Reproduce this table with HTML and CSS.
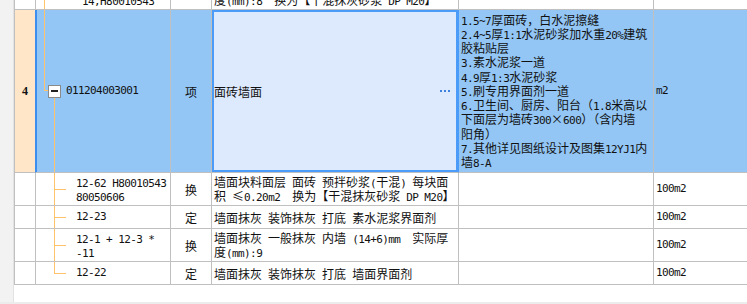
FILE: index.html
```html
<!DOCTYPE html>
<html>
<head>
<meta charset="utf-8">
<link rel="stylesheet" href="styles.css">
</head>
<body>
<div class="screen">
  <div class="main">
    <div class="gutter"></div>
    <div class="sheet">
      <div class="grid">
        <div class="row h33">
          <div class="num"></div>
          <div class="code child tree-up"><div><span class="a">12-1 + 12-3 *</span><br><span class="a"> 14,H80010543</span></div></div>
          <div class="type">换</div>
          <div class="name"><div>墙面抹灰<span class="a"> </span>一般抹灰<span class="a"> </span>内墙<span class="a"> (14+6)mm  </span>实际厚<br>度<span class="a">(mm):8  </span>换为【干混抹灰砂浆<span class="a"> DP M20</span>】</div></div>
          <div class="feat"></div>
          <div class="unit"><span class="a">100m2</span></div>
        </div>
        <div class="row h163 sel">
          <div class="num">4</div>
          <div class="code parent"><span class="box"></span><span class="a">011204003001</span></div>
          <div class="type">项</div>
          <div class="name edit"><span>面砖墙面</span><span class="more"></span></div>
          <div class="feat"><div class="lines"><span class="a">1.5~7</span>厚面砖，白水泥擦缝<br><span class="a">2.4~5</span>厚<span class="a">1:1</span>水泥砂浆加水重<span class="a">20%</span>建筑<br>胶粘贴层<br><span class="a">3.</span>素水泥浆一道<br><span class="a">4.9</span>厚<span class="a">1:3</span>水泥砂浆<br><span class="a">5.</span>刷专用界面剂一道<br><span class="a">6.</span>卫生间、厨房、阳台（<span class="a">1.8</span>米高以<br>下面层为墙砖<span class="a">300</span><span class="w">×</span><span class="a">600</span>）（含内墙<br>阳角）<br><span class="a">7.</span>其他详见图纸设计及图集<span class="a">12YJ1</span>内<br>墙<span class="a">8-A</span></div></div>
          <div class="unit"><span class="a">m2</span></div>
        </div>
        <div class="row h33">
          <div class="num"></div>
          <div class="code child tree-mid"><div><span class="a">12-62 H80010543</span><br><span class="a">80050606</span></div></div>
          <div class="type">换</div>
          <div class="name"><div>墙面块料面层<span class="a"> </span>面砖<span class="a"> </span>预拌砂浆<span class="a">(</span>干混<span class="a">) </span>每块面<br>积<span class="a"> </span><span class="w">≤</span><span class="a">0.20m2  </span>换为【干混抹灰砂浆<span class="a"> DP M20</span>】</div></div>
          <div class="feat"></div>
          <div class="unit"><span class="a">100m2</span></div>
        </div>
        <div class="row h23">
          <div class="num"></div>
          <div class="code child tree-mid"><span class="a">12-23</span></div>
          <div class="type">定</div>
          <div class="name">墙面抹灰<span class="a"> </span>装饰抹灰<span class="a"> </span>打底<span class="a"> </span>素水泥浆界面剂</div>
          <div class="feat"></div>
          <div class="unit"><span class="a">100m2</span></div>
        </div>
        <div class="row h33">
          <div class="num"></div>
          <div class="code child tree-mid"><div><span class="a">12-1 + 12-3 *</span><br><span class="a">-11</span></div></div>
          <div class="type">换</div>
          <div class="name"><div>墙面抹灰<span class="a"> </span>一般抹灰<span class="a"> </span>内墙<span class="a"> (14+6)mm  </span>实际厚<br>度<span class="a">(mm):9</span></div></div>
          <div class="feat"></div>
          <div class="unit"><span class="a">100m2</span></div>
        </div>
        <div class="row h23">
          <div class="num"></div>
          <div class="code child tree-last"><span class="a">12-22</span></div>
          <div class="type">定</div>
          <div class="name">墙面抹灰<span class="a"> </span>装饰抹灰<span class="a"> </span>打底<span class="a"> </span>墙面界面剂</div>
          <div class="feat"></div>
          <div class="unit"><span class="a">100m2</span></div>
        </div>
      </div>
    </div>
  </div>
  <div class="bottom"></div>
</div>
</body>
</html>
```

FILE: styles.css
```css
* { box-sizing: border-box; }
html, body { margin: 0; padding: 0; background: #fff; }
body {
  font-family: "Noto Sans CJK SC", sans-serif;
  font-size: 12px;
  color: #111;
}
.screen {
  width: 747px;
  height: 304px;
  overflow: hidden;
  display: flex;
  flex-direction: column;
}
.main {
  height: 302px;
  flex: none;
  display: flex;
  overflow: hidden;
}
.gutter {
  width: 14px;
  flex: none;
  background: #f2f2f2;
  border-right: 1px solid #e2e2e2;
}
.sheet { flex: 1; overflow: hidden; }
.bottom { flex: 1; background: #ececec; }

.grid {
  margin-top: -23px;
  border-left: 1px solid #c0c0c0;
}
.row {
  display: grid;
  grid-template-columns: 21px 135px 41px 247px 195px 1fr;
}
.h33 { height: 33px; }
.h23 { height: 23px; }
.h163 { height: 163px; }

.row > div {
  border-right: 1px solid #c0c0c0;
  border-bottom: 1px solid #c0c0c0;
  display: flex;
  align-items: center;
  white-space: nowrap;
  overflow: hidden;
  line-height: 13px;
}
.row > .unit { border-right: none; padding-left: 2px; }

.a {
  font-family: "DejaVu Sans Mono", monospace;
  font-size: 11px;
  line-height: 10px;
  letter-spacing: -0.6px;
  white-space: pre;
}
.w {
  display: inline-block;
  width: 12px;
  line-height: 10px;
  text-align: center;
}

.num {
  justify-content: center;
  font-family: "Liberation Serif", serif;
  font-weight: bold;
  font-size: 12px;
}
.type { justify-content: center; }
.name { padding-left: 2px; }
.feat { padding-left: 2px; }
.lines { line-height: 14.2px; }

/* tree column */
.code.child { padding-left: 40px; }
.code.parent { padding-left: 12px; }
.tree-up {
  background: linear-gradient(#ffc46b, #ffc46b) 8px 0 / 1px 100% no-repeat;
}
.tree-mid {
  background:
    linear-gradient(#ffc46b, #ffc46b) 18px 0 / 1px 100% no-repeat,
    linear-gradient(#ffc46b, #ffc46b) 18px 50% / 12px 1px no-repeat;
}
.tree-last {
  background:
    linear-gradient(#ffc46b, #ffc46b) 18px 0 / 1px 50% no-repeat,
    linear-gradient(#ffc46b, #ffc46b) 18px 50% / 12px 1px no-repeat;
}
.box {
  width: 13px;
  height: 13px;
  border: 1px solid #8a8a8a;
  background: #fff;
  margin-right: 5px;
  display: flex;
  align-items: center;
  justify-content: center;
  flex: none;
}
.box::before {
  content: "";
  width: 7px;
  height: 2px;
  background: #222;
}

/* selected row */
.sel > div { background-color: #93c6f5; }
.sel > .num { background-color: #ffe6c8; border-right-color: #3e8ef0; }
.sel > .code {
  box-shadow: inset 1px 0 0 #3e8ef0;
  background:
    linear-gradient(#ffc46b, #ffc46b) 8px 0 / 1px 81px no-repeat,
    linear-gradient(#ffc46b, #ffc46b) 8px 80px / 5px 1px no-repeat,
    linear-gradient(#ffc46b, #ffc46b) 18px 86px / 1px 100% no-repeat,
    #93c6f5;
}
.sel > .name.edit {
  background-color: #dde9fd;
  box-shadow: inset 0 0 0 2px #4b9bf8;
  border-right-color: #4b9bf8;
  justify-content: space-between;
  padding-right: 8px;
}
.more {
  width: 10px;
  height: 2px;
  background: repeating-linear-gradient(90deg, #3c82dc 0 2px, transparent 2px 4px);
}
```
